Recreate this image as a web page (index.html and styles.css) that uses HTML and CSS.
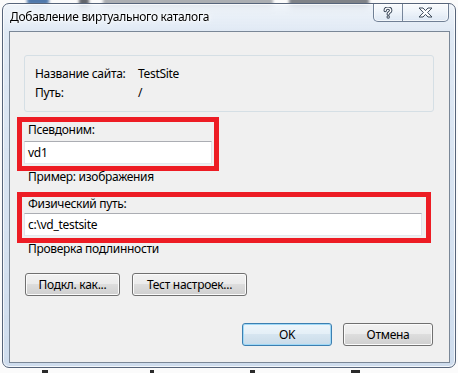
FILE: index.html
```html
<!DOCTYPE html>
<html lang="ru">
<head>
<meta charset="utf-8">
<title>Добавление виртуального каталога</title>
<link rel="stylesheet" href="styles.css">
</head>
<body>
<div class="desk">
  <div class="bg-top">
    <span class="blob blob-icon"></span>
    <span class="blob blob-a"></span>
    <span class="blob blob-b"></span>
    <span class="blob blob-c"></span>
  </div>
  <div class="bg-bottom">
    <span class="mark-dk m1"></span>
    <span class="mark-dk m2"></span>
    <span class="mark-dk m3"></span>
    <span class="mark-dk m4"></span>
  </div>

  <div class="window">
    <div class="titlebar">
      <span class="title">Добавление виртуального каталога</span>
      <div class="caption-btns">
        <span class="cap help">
          <svg width="10" height="12" viewBox="0 0 10 12">
            <path d="M2.2 3.6 C2.2 1.8 3.5 1.1 4.9 1.1 C6.6 1.1 7.7 2.1 7.7 3.4 C7.7 5.2 5.2 5.3 5.2 7.1" fill="none" stroke="#3d4a5b" stroke-width="3.4" stroke-linecap="round"/>
            <circle cx="5.2" cy="10" r="1.7" fill="#3d4a5b"/>
            <path d="M2.2 3.6 C2.2 1.8 3.5 1.1 4.9 1.1 C6.6 1.1 7.7 2.1 7.7 3.4 C7.7 5.2 5.2 5.3 5.2 7.1" fill="none" stroke="#ffffff" stroke-width="1.4" stroke-linecap="round"/>
            <circle cx="5.2" cy="10" r="0.7" fill="#ffffff"/>
          </svg>
        </span>
        <span class="cap close">
          <svg width="15" height="11" viewBox="-1 -1 15 11">
            <polygon points="0,0 4,0 6.5,2.6 9,0 13,0 8.6,4.5 13,9 9,9 6.5,6.4 4,9 0,9 4.4,4.5" fill="#ffffff" stroke="#3d4a5b" stroke-width="1" stroke-linejoin="round"/>
          </svg>
        </span>
      </div>
    </div>

    <div class="client">
      <div class="group">
        <div class="row"><span class="key">Название сайта:</span><span>TestSite</span></div>
        <div class="row"><span class="key">Путь:</span><span>/</span></div>
      </div>

      <div class="mark mark-alias">
        <div class="flabel">Псевдоним:</div>
        <div class="input input-alias">vd1</div>
      </div>
      <div class="hint hint-first">Пример: изображения</div>

      <div class="mark mark-path">
        <div class="flabel flabel-short">Физический путь:</div>
        <div class="input input-path">c:\vd_testsite</div>
      </div>
      <div class="hint">Проверка подлинности</div>

      <div class="btnrow">
        <button class="btn btn-connect">Подкл. как...</button>
        <button class="btn btn-test">Тест настроек...</button>
      </div>

      <div class="okrow">
        <button class="btn btn-dlg btn-default">OK</button>
        <button class="btn btn-dlg">Отмена</button>
      </div>
    </div>
  </div>
</div>
</body>
</html>
```

FILE: styles.css
```css
html, body {
  margin: 0;
  padding: 0;
}

body {
  font-family: "Segoe UI", "Noto Sans", "Open Sans", sans-serif;
  font-size: 12px;
  letter-spacing: -0.3px;
  color: #000;
  background: #ffffff;
}

.desk {
  position: relative;
  width: 458px;
  height: 373px;
  overflow: hidden;
  background: #fbfbfb;
  display: flex;
  flex-direction: column;
}

/* blurred content of the window behind (seen through the glass) */
.bg-top {
  display: flex;
  align-items: flex-start;
  height: 16px;
  padding-left: 27px;
  margin-top: -3px;
}

.blob {
  display: block;
  height: 10px;
  border-radius: 3px;
  filter: blur(1.5px);
}

.blob-icon {
  width: 22px;
  height: 8px;
  background: #4f78ab;
}

.blob-a {
  width: 10px;
  margin-left: 30px;
  background: #3d4149;
  opacity: 0.8;
}

.blob-b {
  width: 170px;
  margin-left: 14px;
  background: #6b7078;
  opacity: 0.55;
}

.blob-c {
  width: 80px;
  margin-left: 16px;
  background: #4b4f57;
  opacity: 0.7;
}

.bg-bottom {
  margin-top: auto;
  height: 6px;
  display: flex;
  align-items: flex-end;
  padding-left: 42px;
}

.mark-dk {
  display: block;
  width: 6px;
  height: 3px;
  background: #2a2a2a;
}

.m2 { margin-left: 102px; width: 4px; }
.m3 { margin-left: 96px; width: 5px; }
.m4 { margin-left: 96px; width: 9px; }

/* dialog window */
.window {
  position: absolute;
  left: 2px;
  top: 3px;
  width: 454px;
  height: 365px;
  box-sizing: border-box;
  border: 1px solid #56647a;
  border-radius: 7px;
  padding: 0 5px 4px 6px;
  display: flex;
  flex-direction: column;
  background: linear-gradient(180deg, rgba(236, 242, 249, 0.78) 0%, rgba(218, 229, 242, 0.86) 8%, rgba(203, 218, 236, 0.92) 100%);
  backdrop-filter: blur(3px);
  box-shadow: inset 0 0 0 1px rgba(255, 255, 255, 0.75);
}

.titlebar {
  height: 27px;
  display: flex;
  align-items: flex-start;
  flex-shrink: 0;
}

.title {
  padding-left: 1px;
  margin-top: 5px;
  line-height: 16px;
  color: #000;
  text-shadow: 0 0 6px #fff, 0 0 3px #fff, 0 0 1px #fff;
  white-space: nowrap;
}

.caption-btns {
  margin-left: auto;
  margin-right: 1px;
  display: flex;
  height: 18px;
  box-sizing: border-box;
  border: 1px solid rgba(70, 88, 115, 0.75);
  border-top: none;
  border-radius: 0 0 5px 5px;
  background: linear-gradient(180deg, rgba(255, 255, 255, 0.6) 0%, rgba(240, 245, 251, 0.5) 50%, rgba(215, 227, 241, 0.55) 100%);
  box-shadow: inset 0 0 0 1px rgba(255, 255, 255, 0.6);
  overflow: hidden;
}

.cap {
  display: flex;
  align-items: center;
  justify-content: center;
  height: 17px;
}

.cap.help {
  width: 28px;
  border-right: 1px solid rgba(70, 88, 115, 0.7);
}

.cap.close {
  width: 45px;
}

/* client area */
.client {
  flex: 1;
  box-sizing: border-box;
  border: 1px solid #7a8797;
  background: #f0f0f0;
  display: flex;
  flex-direction: column;
  align-items: flex-start;
}

.group {
  margin: 23px 0 0 14px;
  width: 410px;
  height: 57px;
  box-sizing: border-box;
  border: 1px solid #d5dfe5;
  border-radius: 3px;
  padding: 8px 0 0 10px;
}

.row {
  display: flex;
  height: 19px;
  line-height: 19px;
}

.key {
  width: 103px;
}

.mark {
  margin-left: 7px;
  box-sizing: border-box;
  border: 5px solid #ed1c24;
}

.mark-alias {
  width: 202px;
  margin-top: 5px;
  padding-bottom: 2px;
}

.mark-path {
  width: 414px;
  padding-bottom: 2px;
}

.flabel {
  padding-left: 6px;
  line-height: 16px;
  height: 16px;
  margin-bottom: 3px;
}

.flabel-short {
  line-height: 14px;
  height: 14px;
  margin-bottom: 2px;
}

.input {
  margin-left: 2px;
  height: 23px;
  box-sizing: border-box;
  border: 1px solid;
  border-color: #abadb3 #e2e3ea #e3e9ef #e2e3ea;
  background: #fff;
  padding-left: 3px;
  line-height: 21px;
  white-space: nowrap;
}

.input-alias {
  width: 188px;
}

.input-path {
  width: 398px;
}

.hint {
  padding-left: 18px;
  line-height: 14px;
  height: 14px;
  margin-top: -1px;
}

.hint-first {
  margin-bottom: 8px;
}

.btnrow {
  display: flex;
  gap: 12px;
  margin: 17px 0 0 15px;
}

.btn {
  height: 23px;
  box-sizing: border-box;
  padding: 0;
  font-family: inherit;
  font-size: 12px;
  letter-spacing: -0.3px;
  color: #000;
  border: 1px solid #707070;
  border-radius: 3px;
  background: linear-gradient(180deg, #f2f2f2 0%, #ebebeb 46%, #dddddd 50%, #cfcfcf 100%);
  box-shadow: inset 0 0 0 1px #fbfbfb;
  line-height: 20px;
}

.btn-connect {
  width: 95px;
}

.btn-test {
  width: 115px;
}

.okrow {
  display: flex;
  gap: 11px;
  margin-top: 27px;
  align-self: flex-end;
  margin-right: 16px;
}

.btn-dlg {
  width: 90px;
}

.btn-default {
  border-color: #3c7fb1;
  box-shadow: inset 0 0 0 1px #9fd8f6;
  background: linear-gradient(180deg, #eef6fb 0%, #e4eff7 46%, #d6e5f0 50%, #c9dbe9 100%);
}
```
